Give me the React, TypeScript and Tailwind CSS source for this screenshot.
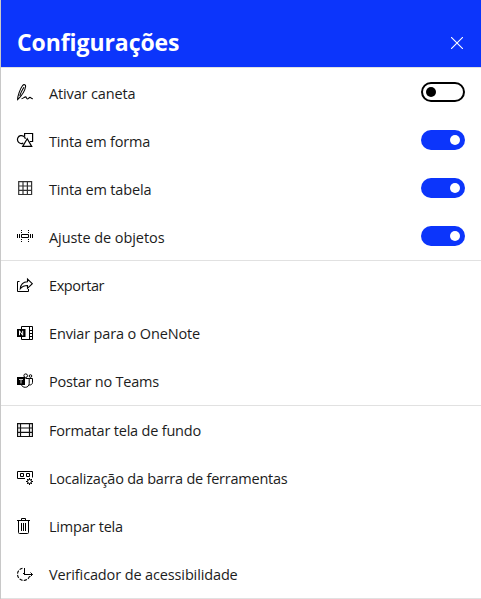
import type { ReactNode } from "react";

function Icon({ children }: { children: ReactNode }) {
  return (
    <svg
      width="16"
      height="16"
      viewBox="0 0 16 16"
      fill="none"
      stroke="#000"
      strokeWidth="1"
      className="shrink-0 overflow-visible"
    >
      {children}
    </svg>
  );
}

const PenIcon = () => (
  <Icon>
    <path
      strokeWidth="1.1"
      d="M.6 15.600C.4 12.600 3.200 4.600 5.600 1.500c1.300-1.500 3.300-.9 3 1C8 6.600 4.600 11.800.6 15.600ZM6.900 3.200C5.300 5.700 3.700 8.800 2.700 11.800M4.500 14.700C6.300 14.700 7.300 12.900 8.500 12.900c1.200 0 .7 2.100 1.900 2.100 1.100 0 1.600-1.600 2.600-1.600 1 0 1 1.400 2.900 1.300"
    />
  </Icon>
);

const ShapesIcon = () => (
  <Icon>
    <g strokeWidth="1.200">
      <path d="M7.600 4.500V1.500h8V9.500H12.800" />
      <path d="M8.400 6.900A4 4 0 1 0 6.300 11.100" />
      <path d="M10.200 6.800 5.700 14.400H14.700L10.200 6.800Z" />
    </g>
  </Icon>
);

const TableIcon = () => (
  <Icon>
    <path stroke="#333" strokeWidth="1.200" d="M1.700 1.600h12.900v12.900H1.700zM6 1.600v12.900M10.400 1.600v12.900M1.700 6h12.900M1.700 10.400h12.900" />
  </Icon>
);

const SnapIcon = () => (
  <Icon>
    <path d="M4.500 6.500h7v3h-7z" />
    <path d="M.5 6v4M2.500 6v4M13.500 6v4M15.500 6v4" />
    <path strokeDasharray="1 1" d="M4.500 2v4M11.500 2v4M4.500 11v4M11.500 11v4" />
  </Icon>
);

const ShareIcon = () => (
  <Icon>
    <path d="M2.500 4.500h-2v10h11v-2.500" />
    <path
      strokeWidth="1.100"
      d="M3.300 11.700C3.700 7.400 6.300 5 10.500 4.800V2l4.800 4.700-4.800 4.600V8.500C7.500 8.500 5.200 9.400 3.300 11.700Z"
    />
  </Icon>
);

const OneNoteIcon = () => (
  <Icon>
    <path d="M4.500 4V1.500h11v13h-11V12M12.500 1.500v13M12.500 5.500h3M12.500 8.500h3M12.500 11.500h3" />
    <path fill="#000" stroke="none" d="M0 4h8.500v8H0z" />
    <path stroke="#fff" d="M2.500 10.200V5.700L5.700 10.300V5.800" />
  </Icon>
);

const TeamsIcon = () => (
  <Icon>
    <circle cx="8.700" cy="2.700" r="1.800" />
    <circle cx="13.500" cy="3" r="1.300" />
    <path d="M8.500 5.500h3.700v4.800c0 2.500-1.700 4-3.900 4-2 0-3.400-1-3.900-2.500M12.200 5.500h3.300v3.800c0 1.900-1.600 3-3.400 2.600" />
    <path fill="#000" stroke="none" d="M0 4h8v8H0z" />
    <path stroke="#ccc" d="M2 6.500h4M4 6.500v4" />
  </Icon>
);

const BackgroundIcon = () => (
  <Icon>
    <path stroke="#111" strokeWidth="1.200" d="M.6 1.600h14.800v12.900H.6zM3.500 1.600v12.900M12.500 1.600v12.900M.6 6h14.800M.6 10.400h14.800" />
  </Icon>
);

const ToolbarIcon = () => (
  <Icon>
    <path d="M8 8.500H.5v-7h15v6M3.500 3.500h3v3h-3zM9.500 3.500h3v3h-3z" />
    <circle cx="12.500" cy="11.500" r="2" />
    <path d="M12.500 8v1.500M12.500 13.500V15M9 11.500h1.500M14.500 11.500H16M10 9l1.100 1.100M13.900 12.900 15 14M15 9l-1.100 1.100M11.100 12.900 10 14" />
  </Icon>
);

const TrashIcon = () => (
  <Icon>
    <path d="M0 2.500h13M4.500 2.500v-2h4v2M1.500 2.500v12q0 1 1 1h8q1 0 1-1v-12M4.500 5v8M6.500 5v8M8.500 5v8" />
  </Icon>
);

const AccessibilityIcon = () => (
  <Icon>
    <path strokeWidth="1.100" strokeDasharray="3.200 1.300" d="M5.500 2.200A6.200 6.200 0 1 0 12.600 10.200" />
    <path d="M7.500 2v7M6 7.500h2M7.500 8.500h8M13.500 6.500l2 2-2 2" />
  </Icon>
);

function Toggle({ on }: { on: boolean }) {
  return on ? (
    <span className="flex h-5 w-11 items-center justify-end rounded-full bg-[#0c35fb] pr-[5px]">
      <span className="h-2.5 w-2.5 rounded-full bg-white" />
    </span>
  ) : (
    <span className="flex h-5 w-11 items-center rounded-full border-2 border-black pl-[3px]">
      <span className="h-2.5 w-2.5 rounded-full bg-black" />
    </span>
  );
}

type Item = { label: string; icon: ReactNode; tracking: string; on?: boolean };

const groups: Item[][] = [
  [
    { label: "Ativar caneta", icon: <PenIcon />, tracking: "tracking-[-0.15px]", on: false },
    { label: "Tinta em forma", icon: <ShapesIcon />, tracking: "tracking-[-0.2px]", on: true },
    { label: "Tinta em tabela", icon: <TableIcon />, tracking: "tracking-[-0.17px]", on: true },
    { label: "Ajuste de objetos", icon: <SnapIcon />, tracking: "tracking-[-0.07px]", on: true },
  ],
  [
    { label: "Exportar", icon: <ShareIcon />, tracking: "tracking-[-0.4px]" },
    { label: "Enviar para o OneNote", icon: <OneNoteIcon />, tracking: "tracking-[-0.14px]" },
    { label: "Postar no Teams", icon: <TeamsIcon />, tracking: "tracking-[-0.22px]" },
  ],
  [
    { label: "Formatar tela de fundo", icon: <BackgroundIcon />, tracking: "tracking-[-0.2px]" },
    { label: "Localização da barra de ferramentas", icon: <ToolbarIcon />, tracking: "tracking-[-0.23px]" },
    { label: "Limpar tela", icon: <TrashIcon />, tracking: "tracking-[-0.22px]" },
    { label: "Verificador de acessibilidade", icon: <AccessibilityIcon />, tracking: "tracking-[-0.13px]" },
  ],
];

export default function App() {
  return (
    <div className="h-[599px] w-[481px] overflow-hidden border-l border-[#c8c8c8] bg-white font-['Open_Sans','Noto_Sans',sans-serif]">
      <header className="flex h-[68px] items-end justify-between border-b border-[#e1e1e1] bg-[#0c35fb] bg-clip-padding pr-[18px] pb-[9px] pl-4 text-white">
        <h1 className="text-[23px] leading-8 font-bold tracking-[-0.08px]">Configurações</h1>
        <button aria-label="Fechar" className="mb-[9px]">
          <svg width="12" height="12" viewBox="0 0 12 12" stroke="currentColor" strokeWidth="1.1">
            <path d="M0 0 12 12M12 0 0 12" />
          </svg>
        </button>
      </header>

      {groups.map((items, i) => (
        <ul key={i} className="border-b border-[#e1e1e1]">
          {items.map((item) => (
            <li key={item.label} className="flex h-12 items-center px-4">
              {item.icon}
              <span
                className={`ml-4 flex-1 text-[14.5px] leading-5 text-[#1c1c1c] ${item.tracking} ${i === 0 ? "pt-1" : "pt-0.5"}`}
              >
                {item.label}
              </span>
              {item.on !== undefined && <Toggle on={item.on} />}
            </li>
          ))}
        </ul>
      ))}
    </div>
  );
}
